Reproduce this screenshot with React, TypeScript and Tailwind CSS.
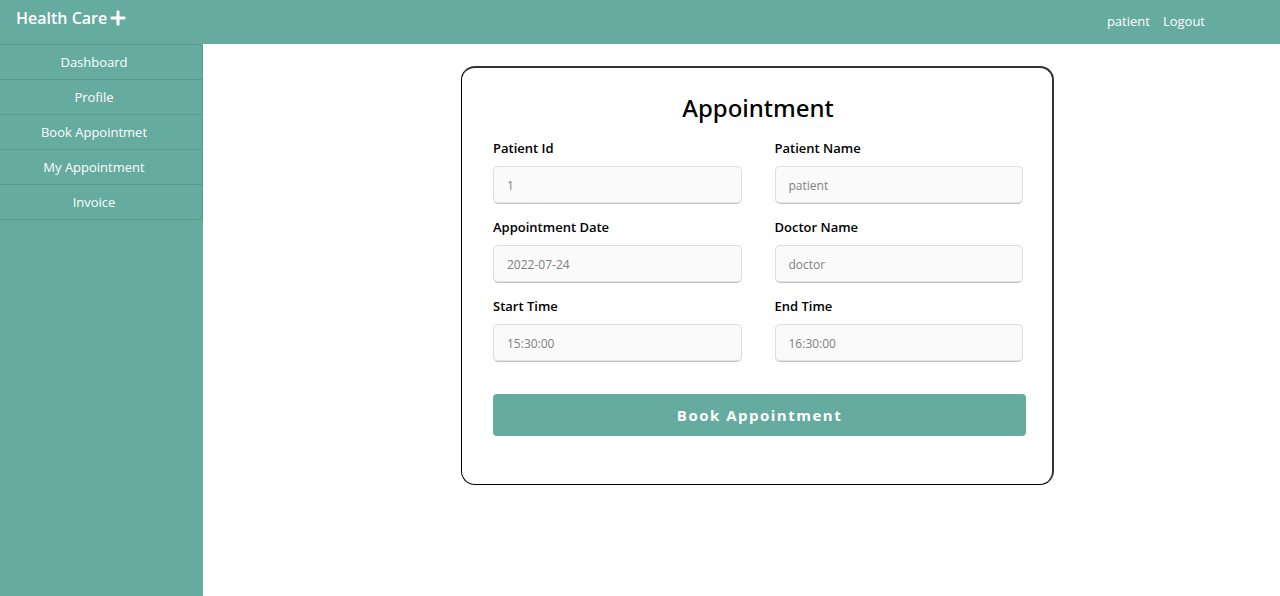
import React from 'react';

const navItems = ['Dashboard', 'Profile', 'Book Appointmet', 'My Appointment', 'Invoice'];

const fields = [
  { id: 'patient-id', label: 'Patient Id', value: '1' },
  { id: 'patient-name', label: 'Patient Name', value: 'patient' },
  { id: 'appointment-date', label: 'Appointment Date', value: '2022-07-24' },
  { id: 'doctor-name', label: 'Doctor Name', value: 'doctor' },
  { id: 'start-time', label: 'Start Time', value: '15:30:00' },
  { id: 'end-time', label: 'End Time', value: '16:30:00' },
];

function PlusIcon() {
  return (
    <svg viewBox="0 0 16 16" className="size-4" fill="currentColor" aria-hidden="true">
      <path d="M7.200 .5h1.600a.7.7 0 0 1 .7.7v5.300h5.300a.7.7 0 0 1 .7.7v1.600a.7.7 0 0 1-.7.7H9.500v5.300a.7.7 0 0 1-.7.7H7.200a.7.7 0 0 1-.7-.7V9.500H1.200a.7.7 0 0 1-.7-.7V7.200a.7.7 0 0 1 .7-.7h5.300V1.200a.7.7 0 0 1 .7-.7z" />
    </svg>
  );
}

function Header() {
  return (
    <header className="flex h-11 items-start justify-between bg-[#65aba0] pl-4 pr-[75px] text-white">
      <a href="#home" className="flex items-center gap-[3px] pt-[6px] text-base font-semibold leading-6">
        Health Care
        <PlusIcon />
      </a>
      <nav className="flex gap-[13px] pt-[11px] text-[13px] leading-5">
        <a href="#patient">patient</a>
        <a href="#logout">Logout</a>
      </nav>
    </header>
  );
}

function Sidebar() {
  return (
    <aside className="w-[203px] shrink-0 bg-[#65aba0]">
      <ul className="rounded-r border-y border-r border-[#579a8f] text-[13px] text-white">
        {navItems.map((item) => (
          <li key={item} className="border-b border-[#579a8f] last:border-b-0">
            <a href="#section" className="block py-[7px] pl-2 pr-[22px] text-center leading-5">
              {item}
            </a>
          </li>
        ))}
      </ul>
    </aside>
  );
}

function AppointmentForm() {
  return (
    <form className="w-full max-w-[593px] rounded-[14px] border-b border-l border-r-2 border-t-2 border-b-black border-l-black border-r-[#333] border-t-[#333] pb-12 pl-[31px] pr-[26px] pt-[23px]">
      <h1 className="mb-[13px] mr-[3px] text-center font-['Noto_Sans','Open_Sans',sans-serif] text-2xl font-medium leading-[34px] text-black">
        Appointment
      </h1>
      <div className="mr-[3px] grid grid-cols-2 gap-x-[33px] gap-y-[13px]">
        {fields.map((field) => (
          <div key={field.id} className="flex flex-col gap-2">
            <label htmlFor={field.id} className="text-[13px] font-semibold leading-5 text-black">
              {field.label}
            </label>
            <input
              id={field.id}
              type="text"
              readOnly
              defaultValue={field.value}
              className="h-[38px] w-full rounded-[5px] border border-[#dedede] border-b-[#c4c4c4] bg-[#fafafa] px-[13px] text-xs text-[#808080] shadow-[inset_0_-1px_0_#e2e2e2]"
            />
          </div>
        ))}
      </div>
      <button
        type="button"
        className="mt-8 h-[42px] w-full rounded bg-[#65aba0] text-[15px] font-bold tracking-widest text-white"
      >
        Book Appointment
      </button>
    </form>
  );
}

export default function App() {
  return (
    <div className="flex min-h-screen flex-col bg-white font-['Open_Sans','Noto_Sans',sans-serif]">
      <Header />
      <div className="flex flex-1">
        <Sidebar />
        <main className="flex flex-1 items-start justify-center pl-8 pt-[22px]">
          <AppointmentForm />
        </main>
      </div>
    </div>
  );
}
